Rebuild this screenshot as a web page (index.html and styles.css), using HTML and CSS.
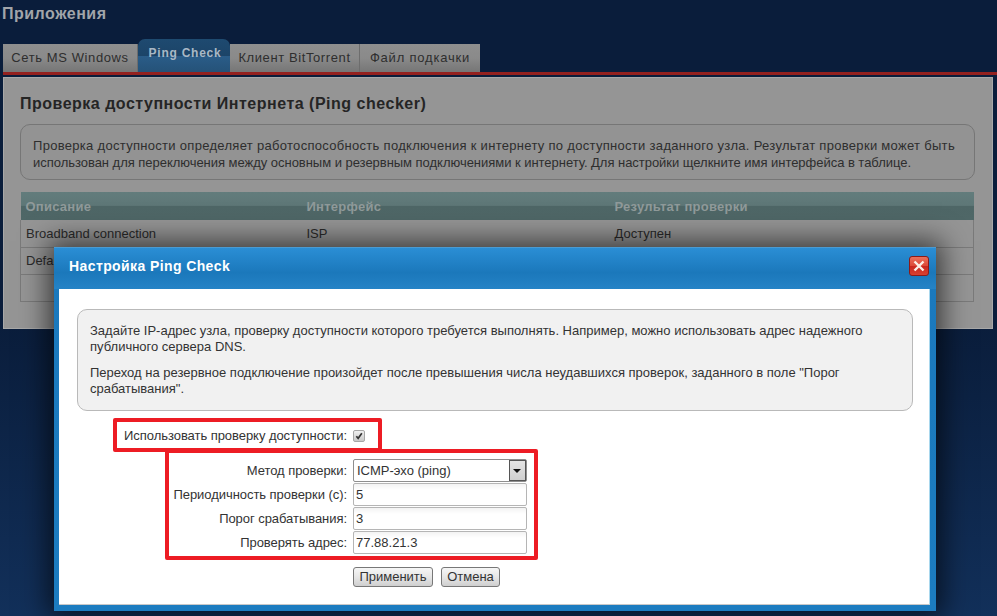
FILE: index.html
```html
<!DOCTYPE html>
<html lang="ru">
<head>
<meta charset="utf-8">
<title>Ping Check</title>
<link rel="stylesheet" href="styles.css">
</head>
<body>
<div class="page">
  <h1 class="app-title">Приложения</h1>
  <div class="tabs">
    <div class="tab tab-a">Сеть MS Windows</div>
    <div class="tab tab-active">Ping Check</div>
    <div class="tab tab-b">Клиент BitTorrent</div>
    <div class="tab tab-c">Файл подкачки</div>
  </div>
  <main class="panel">
    <h2 class="panel-title">Проверка доступности Интернета (Ping checker)</h2>
    <div class="panel-info"><span class="line-wide">Проверка доступности определяет работоспособность подключения к интернету по доступности заданного узла. Результат проверки может быть</span> использован для переключения между основным и резервным подключениями к интернету. Для настройки щелкните имя интерфейса в таблице.</div>
    <table class="grid">
      <thead>
        <tr><th class="c1">Описание</th><th class="c2">Интерфейс</th><th>Результат проверки</th></tr>
      </thead>
      <tbody>
        <tr><td>Broadband connection</td><td>ISP</td><td>Доступен</td></tr>
        <tr><td>Default</td><td></td><td></td></tr>
        <tr><td></td><td></td><td></td></tr>
      </tbody>
    </table>
  </main>
</div>

<section class="dialog">
  <header class="dialog-head">
    <span class="dialog-title">Настройка Ping Check</span>
    <span class="close">
      <svg viewBox="0 0 12 12" width="12" height="12"><path d="M1.5 1.5 10.5 10.5M10.5 1.5 1.5 10.5" stroke="#fbeee6" stroke-width="2.4" fill="none"/></svg>
    </span>
  </header>
  <div class="dialog-body">
    <div class="note">
      <p>Задайте IP-адрес узла, проверку доступности которого требуется выполнять. Например, можно использовать адрес надежного публичного сервера DNS.</p>
      <p>Переход на резервное подключение произойдет после превышения числа неудавшихся проверок, заданного в поле "Порог срабатывания".</p>
    </div>
    <form class="form">
      <div class="mark mark-a"></div>
      <div class="mark mark-b"></div>
      <div class="row row-check">
        <label class="lbl">Использовать проверку доступности:</label>
        <span class="check">
          <svg viewBox="0 0 12 12" width="12" height="12"><path d="M2.8 6.2 5 8.8 9.4 2.8" stroke="#333" stroke-width="2" fill="none"/></svg>
        </span>
      </div>
      <div class="row">
        <label class="lbl">Метод проверки:</label>
        <div class="select">ICMP-эхо (ping)<span class="arrow"></span></div>
      </div>
      <div class="row">
        <label class="lbl">Периодичность проверки (с):</label>
        <div class="input">5</div>
      </div>
      <div class="row">
        <label class="lbl">Порог срабатывания:</label>
        <div class="input">3</div>
      </div>
      <div class="row">
        <label class="lbl">Проверять адрес:</label>
        <div class="input">77.88.21.3</div>
      </div>
      <div class="buttons">
        <span class="btn btn-apply">Применить</span>
        <span class="btn btn-cancel">Отмена</span>
      </div>
    </form>
  </div>
</section>
</body>
</html>
```
FILE: styles.css
```css
* { box-sizing: border-box; }
html, body { margin: 0; height: 616px; overflow: hidden; }
body {
  position: relative;
  font-family: "Liberation Sans", Arial, sans-serif;
  font-size: 13px;
  color: #222;
  background: linear-gradient(180deg, #0a1d3b 0, #0a1d3b 320px, #12305a 616px);
}
.page { padding: 0 4px 0 3px; }
.app-title {
  margin: 0 0 0 -1px;
  height: 39px;
  padding: 5px 0 0 0;
  font-size: 16px;
  line-height: 17px;
  font-weight: bold;
  color: #a2a5aa;
  letter-spacing: .5px;
}
.tabs { display: flex; align-items: flex-end; height: 33px; position: relative; }
.tabs::after {
  content: "";
  position: absolute;
  left: 0;
  right: -4px;
  bottom: -3px;
  height: 3px;
  background: #93211f;
}
.tab {
  height: 28px;
  line-height: 27px;
  text-align: center;
  color: #2e2e2e;
  background: linear-gradient(180deg, #8e8e8e 0, #8a8a8a 50%, #767676 100%);
  border-right: 1px solid #6d6d6d;
  font-size: 13px;
  letter-spacing: .6px;
}
.tab-a { width: 135px; }
.tab-active {
  width: 92px;
  height: 33px;
  padding-left: 2px;
  line-height: 28px;
  font-weight: bold;
  font-size: 12px;
  color: #a9b8c6;
  border: 0;
  border-radius: 7px 7px 0 0;
  background: linear-gradient(180deg, #1e4a70 0, #1c4468 50%, #2a5c88 52%, #255278 100%);
  letter-spacing: .75px;
}
.tab-b { width: 130px; }
.tab-c { width: 120px; border-right: 0; letter-spacing: .8px; }
.panel {
  margin-top: 5px;
  height: 252px;
  padding: 16px 17px 0 16px;
  background: #959595;
  border: 1px solid #a8a8a8;
}
.panel-title {
  margin: 0 0 10px;
  height: 20px;
  font-size: 16px;
  line-height: 20px;
  font-weight: bold;
  color: #252525;
  letter-spacing: .5px;
}
.panel-info {
  height: 56px;
  padding: 12px 12px 0;
  border: 1px solid #767676;
  border-radius: 10px;
  line-height: 17px;
  color: #2e2e2e;
  background: #939393;
  letter-spacing: -.03px;
}
.line-wide { letter-spacing: .3px; }
.grid {
  width: 954px;
  margin: 12px 0 0 0;
  border-collapse: collapse;
  table-layout: fixed;
  color: #2a2a2a;
}
.grid th {
  height: 28px;
  padding: 0 5px;
  text-align: left;
  font-size: 13px;
  letter-spacing: .25px;
  color: #909a9a;
  background: linear-gradient(180deg, #627c7c 0, #5e7777 48%, #4e6666 50%, #4f6767 100%);
}
.grid td {
  height: 27px;
  padding: 0 5px;
  border: 1px solid #7a7a7a;
  border-width: 0 0 1px 0;
}
.grid tr td:first-child { border-left: 1px solid #7a7a7a; }
.grid tr td:last-child { border-right: 1px solid #7a7a7a; }
.c1 { width: 281px; }
.c2 { width: 308px; }

.dialog {
  position: absolute;
  left: 54px;
  top: 247px;
  width: 882px;
  height: 364px;
  padding: 0 6px 6px 5px;
  background: linear-gradient(180deg, #2b8fd6 0, #1b79bd 25px, #1c7cc0 100%);
  border-top: 1px solid #4a9bd2;
  box-shadow: 0 0 26px 6px rgba(0,0,0,.62);
}
.dialog-head {
  display: flex;
  align-items: center;
  justify-content: space-between;
  height: 41px;
  margin: 0 -6px 0 -5px;
  padding: 0 7px 5px 15px;
  background: linear-gradient(180deg, #2a8ed5 0, #1b78bb 60%, #2583c6 100%);
}
.dialog-title {
  font-size: 14px;
  font-weight: bold;
  color: #fff;
  letter-spacing: .4px;
}
.close {
  display: flex;
  align-items: center;
  justify-content: center;
  width: 20px;
  height: 20px;
  border: 1px solid #8c1a18;
  border-radius: 3px;
  background: linear-gradient(180deg, #e9705c 0, #dd4a38 48%, #c9281e 52%, #d84030 100%);
}
.dialog-body {
  height: 316px;
  padding: 20px 16px 0 18px;
  background: #fff;
  border-right: 1px solid #a9d8ee;
  border-bottom: 1px solid #c8c8c8;
}
.note {
  height: 102px;
  padding: 13px 12px 0;
  border: 1px solid #b9b9b9;
  border-radius: 10px;
  background: #f1f1f1;
  line-height: 16px;
  color: #333;
}
.note p { margin: 0 0 10px; }
.form {
  position: relative;
  margin: 7px 0 0 -18px;
  padding-top: 6px;
  color: #333;
}
.mark { position: absolute; border: 4px solid #ed1c24; border-radius: 2px; }
.mark-a { left: 54px; top: 0; width: 269px; height: 34px; }
.mark-b { left: 106px; top: 31px; width: 373px; height: 111px; }
.row {
  display: grid;
  grid-template-columns: 288px 174px;
  column-gap: 6px;
  align-items: center;
  height: 24px;
  position: relative;
}
.row-check { height: 23px; margin-bottom: 11px; }
.lbl { text-align: right; letter-spacing: -.05px; }
.check {
  display: flex;
  align-items: center;
  justify-content: center;
  width: 12px;
  height: 12px;
  border: 1px solid #a6a6a6;
  border-radius: 2px;
  background: linear-gradient(180deg, #f0f0f0, #c8c8c8);
}
.input, .select {
  position: relative;
  height: 23px;
  line-height: 21px;
  padding-left: 2px;
  border: 1px solid #b5b5b5;
  border-radius: 2px;
  background: linear-gradient(180deg, #f3f3f3 0, #fff 6px);
  color: #333;
}
.select { padding-left: 3px; border-color: #8e8e8e; background: #fff; }
.arrow {
  position: absolute;
  right: 0;
  top: 0;
  width: 17px;
  height: 21px;
  border: 1px solid #555;
  background: linear-gradient(180deg, #e4e4e4, #cfcfcf);
}
.arrow::after {
  content: "";
  position: absolute;
  left: 3px;
  top: 8px;
  border: 4px solid transparent;
  border-top: 4px solid #111;
  border-bottom: 0;
}
.buttons {
  display: flex;
  gap: 8px;
  margin: 13px 0 0 294px;
}
.btn {
  height: 20px;
  line-height: 18px;
  text-align: center;
  border: 1px solid #777;
  border-radius: 3px;
  background: linear-gradient(180deg, #f6f6f6 0, #e6e6e6 50%, #cfcfcf 100%);
  color: #333;
}
.btn-apply { width: 80px; }
.btn-cancel { width: 59px; }
```
